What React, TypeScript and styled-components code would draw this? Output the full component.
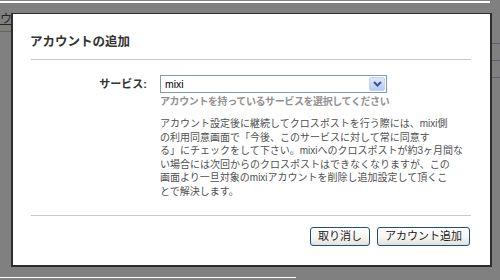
import React from "react";
import styled, { createGlobalStyle } from "styled-components";

const Global = createGlobalStyle`
  html, body { margin: 0; padding: 0; }
  body { font-family: "Liberation Sans", "Noto Sans CJK JP", sans-serif; }
`;

const Screen = styled.div`
  position: relative;
  width: 500px;
  height: 280px;
  overflow: hidden;
  background: #808080;
`;

const BehindPage = styled.div`
  display: flex;
  flex-direction: column;
  height: 100%;
`;

const TopRule = styled.div`
  margin-top: 1px;
  height: 2px;
  width: 490px;
  background: #ffffff;
`;

const BehindRow = styled.div`
  display: flex;
  justify-content: space-between;
  align-items: flex-start;
  flex: 1;
`;

const CrumbText = styled.div`
  margin: 9px 0 0 0;
  padding-bottom: 5px;
  font-size: 12px;
  line-height: 14px;
  color: #262626;
  text-decoration: underline;
  border-bottom: 1px solid #5f6a52;
`;

const SideList = styled.div`
  display: flex;
  flex-direction: column;
  width: 8px;
  margin-top: 24px;
`;

const SideItem = styled.div`
  height: 16px;
  border-bottom: 1px solid #5a6272;
`;

const BottomRule = styled.div`
  height: 1px;
  width: 296px;
  background: #ffffff;
  margin-bottom: 2px;
`;

const Dialog = styled.div`
  position: absolute;
  left: 11px;
  top: 13px;
  width: 477px;
  height: 251px;
  background: #ffffff;
  border: 2px solid #2e2e2e;
  border-top-width: 1px;
  display: flex;
  flex-direction: column;
`;

const Header = styled.div`
  box-sizing: border-box;
  height: 46px;
  margin: 0 19px 0 18px;
  padding-top: 20px;
  border-bottom: 1px solid #c8c8c8;
`;

const Title = styled.h2`
  margin: 0 0 0 -1px;
  font-size: 12.5px;
  line-height: 16px;
  font-weight: bold;
  color: #333333;
`;

const Body = styled.div`
  margin: 0 19px 0 18px;
  padding: 15px 0 16px;
  border-bottom: 1px solid #c8c8c8;
  display: grid;
  grid-template-columns: 116px 1fr;
  column-gap: 13px;
`;

const Label = styled.label`
  font-size: 11px;
  line-height: 18px;
  font-weight: bold;
  color: #333333;
  text-align: right;
`;

const Field = styled.div`
  display: flex;
  flex-direction: column;
`;

const Select = styled.div`
  box-sizing: border-box;
  width: 227px;
  height: 18px;
  border: 1px solid #7f9db9;
  display: flex;
  align-items: center;
  padding-left: 4px;
  font-size: 10.5px;
  color: #000;
`;

const DropButton = styled.span`
  margin-left: auto;
  margin-right: 1px;
  box-sizing: border-box;
  width: 16px;
  height: 14px;
  border: 1px solid #c3d3f8;
  border-radius: 2px;
  background: linear-gradient(#dfe8fd, #b6caf6);
  display: flex;
  align-items: center;
  justify-content: center;
`;

const Hint = styled.div`
  margin-top: 2px;
  font-size: 10px;
  line-height: 14px;
  font-weight: bold;
  color: #929292;
  letter-spacing: -0.4px;
  white-space: nowrap;
`;

const Paragraph = styled.p`
  margin: 8px 0 0;
  font-size: 10px;
  line-height: 13.6px;
  color: #505050;
`;

const Line = styled.span`
  display: block;
  white-space: nowrap;
`;

const Footer = styled.div`
  display: flex;
  justify-content: flex-end;
  gap: 7px;
  padding: 11px 20px 0 0;
`;

const Button = styled.button`
  box-sizing: border-box;
  height: 19px;
  padding: 0 7px;
  border: 1px solid #1f4f7f;
  border-radius: 3px;
  background: linear-gradient(#ffffff 0%, #f6f5f0 55%, #e3e0d6 100%);
  font-family: "Liberation Sans", "Noto Sans CJK JP", sans-serif;
  font-size: 11px;
  line-height: 17px;
  color: #1a1a1a;
`;

const lines = [
  "アカウント設定後に継続してクロスポストを行う際には、mixi側",
  "の利用同意画面で「今後、このサービスに対して常に同意す",
  "る」にチェックをして下さい。mixiへのクロスポストが約3ヶ月間な",
  "い場合には次回からのクロスポストはできなくなりますが、この",
  "画面より一旦対象のmixiアカウントを削除し追加設定して頂くこ",
  "とで解決します。",
];

export default function App() {
  return (
    <Screen>
      <Global />
      <BehindPage>
        <TopRule />
        <BehindRow>
          <CrumbText>ウ</CrumbText>
          <SideList>
            <SideItem />
            <SideItem />
            <SideItem />
          </SideList>
        </BehindRow>
        <BottomRule />
      </BehindPage>
      <Dialog>
        <Header>
          <Title>アカウントの追加</Title>
        </Header>
        <Body>
          <Label>サービス:</Label>
          <Field>
            <Select>
              mixi
              <DropButton>
                <svg width="9" height="6" viewBox="0 0 9 6">
                  <path d="M1 1 L4.5 4.5 L8 1" fill="none" stroke="#3f5580" strokeWidth="2" />
                </svg>
              </DropButton>
            </Select>
            <Hint>アカウントを持っているサービスを選択してください</Hint>
            <Paragraph>
              {lines.map((l) => (
                <Line key={l}>{l}</Line>
              ))}
            </Paragraph>
          </Field>
        </Body>
        <Footer>
          <Button>取り消し</Button>
          <Button>アカウント追加</Button>
        </Footer>
      </Dialog>
    </Screen>
  );
}
